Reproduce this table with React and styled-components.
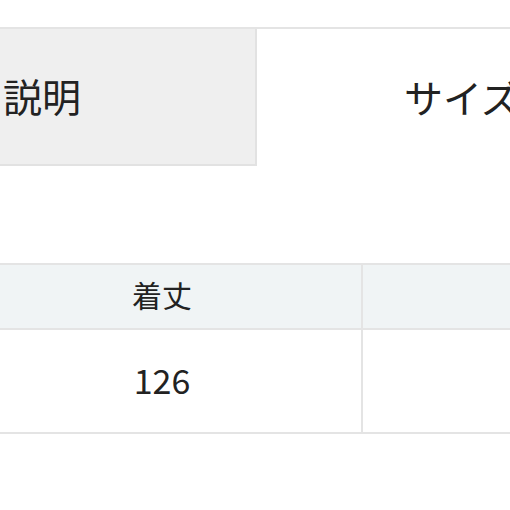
import React from 'react';
import styled, { createGlobalStyle } from 'styled-components';

const GlobalStyle = createGlobalStyle`
  html, body {
    margin: 0;
    padding: 0;
    background: #ffffff;
    overflow: hidden;
  }
  body {
    font-family: "Noto Sans CJK JP", "Noto Sans", sans-serif;
    color: #222;
  }
`;

const Page = styled.div`
  width: 510px;
  height: 510px;
  overflow: hidden;
  padding-top: 27px;
  box-sizing: border-box;
`;

const TabBar = styled.div`
  display: grid;
  grid-template-columns: 257px 1fr;
  height: 137px;
  border-top: 2px solid #e4e4e4;
`;

const Tab = styled.div`
  display: flex;
  align-items: center;
  padding-left: ${p => p.$indent}px;
  font-size: 39px;
  white-space: nowrap;
  overflow: hidden;
  color: #222;
  background: ${p => (p.$active ? '#ffffff' : '#efefef')};
  border-right: ${p => (p.$active ? 'none' : '2px solid #e2e2e2')};
  border-bottom: ${p => (p.$active ? 'none' : '2px solid #e2e2e2')};
  box-sizing: border-box;
  padding-bottom: 4px;
`;

const SizeTable = styled.div`
  margin: 97px 0 0 -37px;
  display: grid;
  grid-template-columns: 400px 1fr;
  border-top: 2px solid #e4e4e4;
  border-bottom: 2px solid #e4e4e4;
`;

const Cell = styled.div`
  display: flex;
  align-items: center;
  justify-content: center;
  box-sizing: border-box;
  height: ${p => (p.$head ? '65px' : '102px')};
  background: ${p => (p.$head ? '#f0f4f5' : '#ffffff')};
  border-right: ${p => (p.$divider ? '2px solid #e4e4e4' : 'none')};
  border-bottom: ${p => (p.$head ? '2px solid #e4e4e4' : 'none')};
  font-size: ${p => (p.$head ? '30px' : '34px')};
  padding-bottom: ${p => (p.$head ? '6px' : '4px')};
  color: #222;
`;

export default function App() {
  return (
    <>
      <GlobalStyle />
      <Page>
        <TabBar>
          <Tab $indent={3}>説明</Tab>
          <Tab $active $indent={147}>サイズ</Tab>
        </TabBar>
        <SizeTable>
          <Cell $head $divider>着丈</Cell>
          <Cell $head />
          <Cell $divider>126</Cell>
          <Cell />
        </SizeTable>
      </Page>
    </>
  );
}
